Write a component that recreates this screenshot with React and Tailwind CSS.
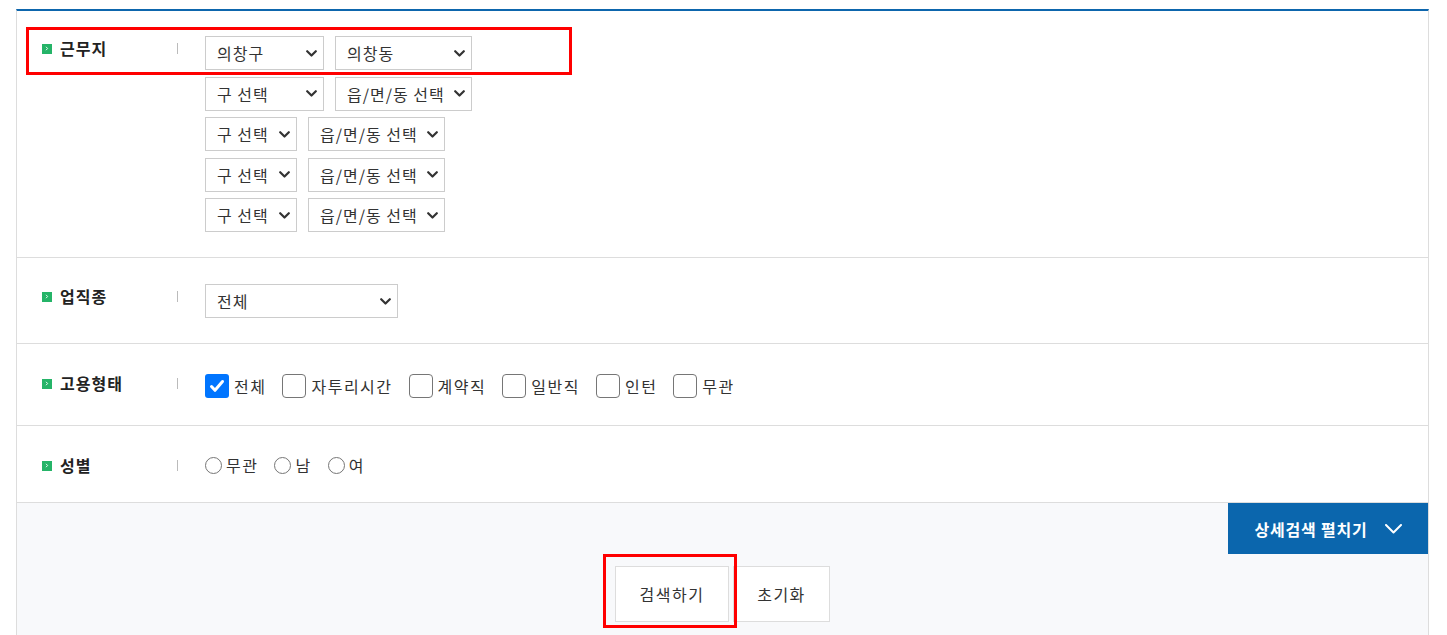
import React from 'react';

const font = { fontFamily: '"Noto Sans CJK KR", "Noto Sans", sans-serif' };

const Chevron = ({ className = '' }) => (
  <svg className={className} width="11" height="7" viewBox="0 0 11 7" fill="none">
    <path d="M1.2 1.2l4.3 4.3 4.3-4.3" stroke="#333" strokeWidth="2.2" strokeLinecap="round" strokeLinejoin="round" />
  </svg>
);

const Select = ({ label, width }) => (
  <div
    className={`${width} h-[34px] border border-[#cccccc] bg-white flex items-center justify-between pl-[11px] pr-[6px] text-[16px] text-[#333] leading-none tracking-[1px]`}
  >
    <span>{label}</span>
    <Chevron />
  </div>
);

const Label = ({ text }) => (
  <div className="w-[188px] shrink-0 flex items-center h-[24px]">
    <div className="w-[160px] flex items-center pl-[25px]">
      <span className="w-[10px] h-[10px] bg-[#25b468] flex items-center justify-center mr-[8px] mt-[1px]">
        <svg width="4" height="5" viewBox="0 0 4 5">
          <path d="M1 0.8l1.6 1.7L1 4.2" stroke="#fff" strokeWidth="0.9" fill="none" />
        </svg>
      </span>
      <span className="text-[16px] font-bold text-[#222] leading-[24px] tracking-[1px]">{text}</span>
    </div>
    <span className="w-px h-[11px] bg-[#bbbbbb] mt-[1px]" />
  </div>
);

const Checkbox = ({ label, checked }) => (
  <label className="flex items-center mr-[16px]">
    {checked ? (
      <span className="w-[24px] h-[24px] rounded-[3px] bg-[#0075ff] flex items-center justify-center">
        <svg width="18" height="18" viewBox="0 0 18 18" fill="none">
          <path d="M3.5 9.5l3.5 3.8 7.5-8.8" stroke="#fff" strokeWidth="3" strokeLinecap="round" strokeLinejoin="round" />
        </svg>
      </span>
    ) : (
      <span className="w-[24px] h-[24px] rounded-[4px] border-[1.5px] border-[#767676] bg-white" />
    )}
    <span className="ml-[5px] text-[16px] text-[#333] leading-[24px] tracking-[1.5px]">{label}</span>
  </label>
);

const Radio = ({ label }) => (
  <label className="flex items-center mr-[16px]">
    <span className="w-[17px] h-[17px] rounded-full border border-[#767676] bg-white" />
    <span className="ml-[4px] text-[16px] text-[#333] leading-[24px] tracking-[1.5px]">{label}</span>
  </label>
);

export default function App() {
  const regions = [
    ['구 선택', '읍/면/동 선택'],
    ['구 선택', '읍/면/동 선택'],
    ['구 선택', '읍/면/동 선택'],
  ];

  return (
    <div className="relative w-[1447px] h-[635px] overflow-hidden bg-white" style={font}>
      <div className="ml-[16px] mt-[9px] w-[1413px] border-t-2 border-t-[#0d66ad] border-x border-x-[#dddddd]">
        {/* 근무지 */}
        <div className="flex items-start pt-[25px] pb-[25px] border-b border-[#dddddd]">
          <Label text="근무지" />
          <div className="flex flex-col gap-[6.5px]">
            <div className="flex gap-[11px]">
              <Select label="의창구" width="w-[119px]" />
              <Select label="의창동" width="w-[137px]" />
            </div>
            <div className="flex gap-[11px]">
              <Select label="구 선택" width="w-[119px]" />
              <Select label="읍/면/동 선택" width="w-[137px]" />
            </div>
            {regions.map((r, i) => (
              <div key={i} className="flex gap-[11px]">
                <Select label={r[0]} width="w-[92px]" />
                <Select label={r[1]} width="w-[137px]" />
              </div>
            ))}
          </div>
        </div>

        {/* 업직종 */}
        <div className="flex items-start pt-[26px] pb-[25px] border-b border-[#dddddd]">
          <Label text="업직종" />
          <Select label="전체" width="w-[193px]" />
        </div>

        {/* 고용형태 */}
        <div className="flex items-start pt-[27px] pb-[27px] border-b border-[#dddddd]">
          <Label text="고용형태" />
          <div className="flex items-center mt-[3px]">
            <Checkbox label="전체" checked />
            <Checkbox label="자투리시간" />
            <Checkbox label="계약직" />
            <Checkbox label="일반직" />
            <Checkbox label="인턴" />
            <Checkbox label="무관" />
          </div>
        </div>

        {/* 성별 */}
        <div className="flex items-start pt-[27px] pb-[25px] border-b border-[#dddddd]">
          <Label text="성별" />
          <div className="flex items-center">
            <Radio label="무관" />
            <Radio label="남" />
            <Radio label="여" />
          </div>
        </div>

        {/* Bottom */}
        <div className="bg-[#f8f9fb] flex flex-col pb-[40px]">
          <button className="self-end h-[51px] w-[200px] bg-[#0b66ad] text-white text-[16px] font-bold tracking-[0.8px] flex items-center justify-center gap-[17px]">
            <span>상세검색 펼치기</span>
            <svg width="17" height="10" viewBox="0 0 17 10" fill="none">
              <path d="M1 1l7.5 7.5L16 1" stroke="#fff" strokeWidth="2" strokeLinecap="round" strokeLinejoin="round" />
            </svg>
          </button>
          <div className="flex justify-center gap-[4px] mt-[12px]">
            <button className="w-[114px] h-[56px] bg-white border border-[#dddddd] text-[16px] text-[#333] tracking-[1.5px]">검색하기</button>
            <button className="w-[97px] h-[56px] bg-white border border-[#dddddd] text-[16px] text-[#333] tracking-[1.5px]">초기화</button>
          </div>
        </div>
      </div>

      {/* highlight boxes */}
      <div className="absolute left-[26px] top-[27px] w-[546px] h-[48px] border-[3px] border-[#ff0000] pointer-events-none" />
      <div className="absolute left-[603px] top-[554px] w-[134px] h-[74px] border-[3px] border-[#ff0000] pointer-events-none" />
    </div>
  );
}
